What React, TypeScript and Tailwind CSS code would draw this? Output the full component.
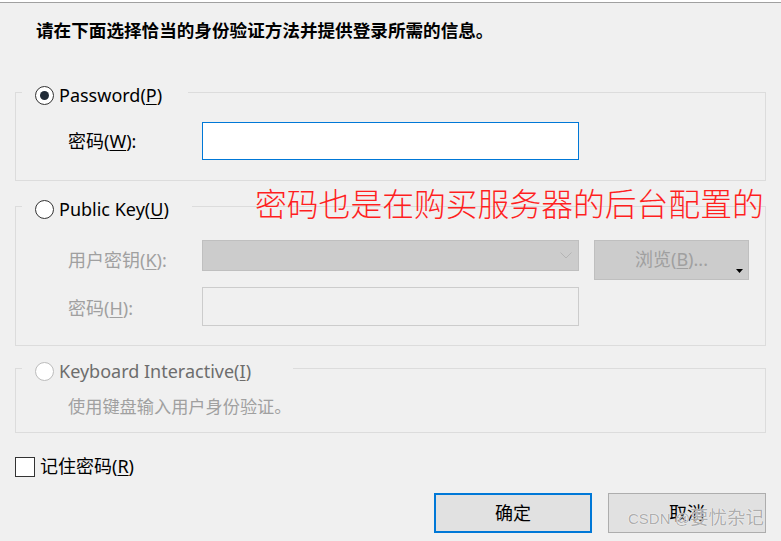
import React from "react";

const font = { fontFamily: '"Noto Sans", "Noto Sans CJK SC", sans-serif' };

const Radio = ({ checked, disabled }: { checked?: boolean; disabled?: boolean }) => (
  <span
    className={`flex items-center justify-center w-[19px] h-[19px] rounded-full border bg-white shrink-0 ${
      disabled ? "border-[#bcbcbc]" : "border-[#333333]"
    }`}
  >
    {checked && <span className="w-[9px] h-[9px] rounded-full bg-[#1f2a36]" />}
  </span>
);

const Legend = ({
  children,
  checked,
  disabled,
  width,
}: {
  children: React.ReactNode;
  checked?: boolean;
  disabled?: boolean;
  width: string;
}) => (
  <div className={`ml-[6px] ${width} h-[24px] -mt-[10px] flex items-center gap-[5px] pl-[13px] bg-[#f0f0f0]`}>
    <Radio checked={checked} disabled={disabled} />
    <span className={`text-[18px] leading-none ${disabled ? "text-[#6d6d6d]" : "text-black"}`}>{children}</span>
  </div>
);

export default function App() {
  return (
    <div className="w-[781px] h-[541px] bg-white pt-[2px] overflow-hidden" style={font}>
      <div className="relative h-full border-t border-[#a0a0a0] bg-[#f0f0f0]">
        {/* Title */}
        <div className="pt-[15px] pl-[36px] h-[89px] text-[17.6px] leading-[24px] font-bold text-black">
          请在下面选择恰当的身份验证方法并提供登录所需的信息。
        </div>

        {/* Password group */}
        <div className="ml-[15px] w-[751px] h-[89px] border border-[#dcdcdc]">
          <Legend checked width="w-[166px]">
            Password(<span className="underline underline-offset-2">P</span>)
          </Legend>
          <div className="flex items-center mt-[15px] pl-[52px]">
            <span className="w-[134px] text-[18px] text-black">
              密码(<span className="underline underline-offset-2">W</span>):
            </span>
            <div className="w-[377px] h-[38px] bg-white border border-[#0078d7]" />
          </div>
        </div>

        {/* Public key group */}
        <div className="ml-[15px] mt-[25px] w-[751px] h-[140px] border border-[#dcdcdc]">
          <Legend width="w-[170px]">
            Public Key(<span className="underline underline-offset-2">U</span>)
          </Legend>
          <div className="flex items-start mt-[19px] pl-[52px]">
            <span className="w-[134px] mt-[7px] text-[18px] text-[#a0a0a0]">
              用户密钥(<span className="underline underline-offset-2">K</span>):
            </span>
            <div className="w-[377px] h-[31px] bg-[#cccccc] border border-[#bfbfbf] flex items-center justify-end pr-[6px]">
              <svg width="12" height="7" viewBox="0 0 12 7">
                <path d="M0.5 0.5 L6 6 L11.5 0.5" fill="none" stroke="#b4b4b4" strokeWidth="1" />
              </svg>
            </div>
            <div className="relative ml-[15px] w-[155px] h-[40px] bg-[#cccccc] border border-[#bfbfbf] flex items-center justify-center pb-[2px] text-[18px] text-[#a0a0a0]">
              <span>
                浏览(<span className="underline underline-offset-2">B</span>)...
              </span>
              <svg className="absolute right-[5px] bottom-[6px]" width="7" height="4" viewBox="0 0 7 4">
                <path d="M0 0 H7 L3.5 4 Z" fill="#000" />
              </svg>
            </div>
          </div>
          <div className="flex items-start mt-[7px] pl-[52px]">
            <span className="w-[134px] mt-[8px] text-[18px] text-[#a0a0a0]">
              密码(<span className="underline underline-offset-2">H</span>):
            </span>
            <div className="w-[377px] h-[39px] bg-[#f0f0f0] border border-[#cccccc]" />
          </div>
        </div>

        {/* Keyboard interactive group */}
        <div className="ml-[15px] mt-[22px] w-[751px] h-[65px] border border-[#dcdcdc]">
          <Legend disabled width="w-[271px]">
            Keyboard Interactive(<span className="underline underline-offset-2">I</span>)
          </Legend>
          <div className="mt-[12px] pl-[52px] text-[17.2px] leading-[24px] text-[#a0a0a0]">使用键盘输入用户身份验证。</div>
        </div>

        {/* Remember password */}
        <div className="flex items-center gap-[5px] ml-[15px] mt-[20px]">
          <span className="w-[20px] h-[20px] bg-white border border-[#333333]" />
          <span className="text-[18px] text-black">
            记住密码(<span className="underline underline-offset-2">R</span>)
          </span>
        </div>

        {/* Buttons */}
        <div className="flex justify-end gap-[16px] pr-[15px] mt-[13px]">
          <button className="w-[158px] h-[40px] bg-[#e1e1e1] border-2 border-[#0078d7] text-[18px] text-black">确定</button>
          <button className="w-[158px] h-[40px] bg-[#e1e1e1] border border-[#adadad] text-[18px] text-black">取消</button>
        </div>

        {/* Red annotation */}
        <div
          className="absolute left-[255px] top-[184px] text-[31.8px] leading-none font-light text-[#ff1f1f] whitespace-nowrap"
          style={{ fontFamily: '"Noto Sans CJK SC", sans-serif' }}
        >
          密码也是在购买服务器的后台配置的
        </div>

        {/* Watermark */}
        <div
          className="absolute left-[628px] top-[506px] flex items-baseline leading-none text-[#a3a3a3]/90 whitespace-nowrap"
          style={{ fontFamily: '"Liberation Sans", "Noto Sans CJK SC", sans-serif', textShadow: "0 0 1px #fff, 0 0 1px #fff" }}
        >
          <span className="text-[15px]">CSDN @</span>
          <span className="text-[18.5px]">要忧杂记</span>
        </div>
      </div>
    </div>
  );
}
